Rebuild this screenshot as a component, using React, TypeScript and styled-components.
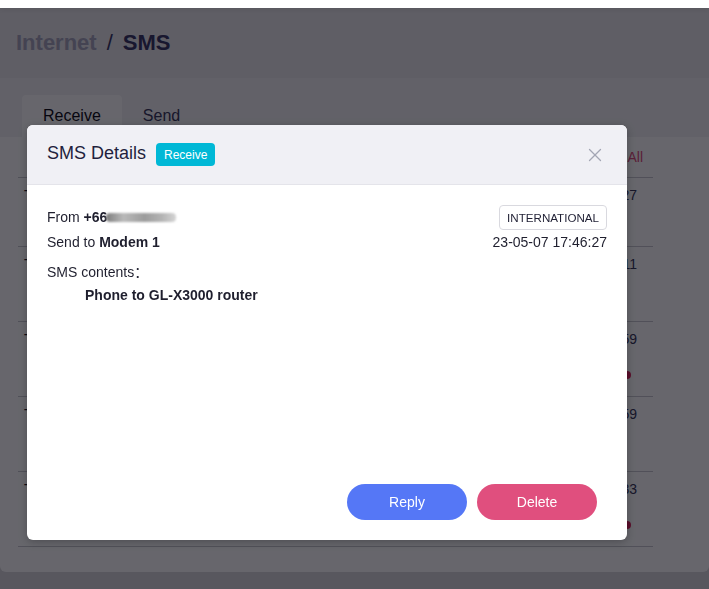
import React from "react";
import styled, { createGlobalStyle } from "styled-components";
import { X } from "lucide-react";

const GlobalStyle = createGlobalStyle`
  html, body {
    margin: 0;
    padding: 0;
    height: 100%;
    overflow: hidden;
  }
  body {
    background: #d9d9dd;
    font-family: "Liberation Sans", Arial, "Noto Sans CJK SC", sans-serif;
    color: #1f1f33;
  }
  * {
    box-sizing: border-box;
  }
`;

const Page = styled.div`
  display: flex;
  flex-direction: column;
  height: 589px;
`;

const TopStrip = styled.div`
  height: 8px;
  background: #fff;
  box-shadow: 0 2px 4px rgba(0, 0, 0, 0.06);
  position: relative;
  z-index: 1;
`;

const Header = styled.div`
  height: 70px;
  background: #eaeaee;
  display: flex;
  align-items: center;
  padding-left: 16px;
  font-size: 22px;
  font-weight: 700;
`;

const Crumb = styled.span<{ current?: boolean }>`
  color: ${({ current }) => (current ? "#3a3a66" : "#a8a8bd")};
`;

const Slash = styled.span`
  font-weight: 400;
  color: #3a3a66;
  margin: 0 10px;
`;

const TabStrip = styled.div`
  background: #f2f2f5;
  padding: 17px 0 0 22px;
  display: flex;
`;

const Tab = styled.div<{ active?: boolean }>`
  height: 42px;
  padding: 0 21px;
  display: flex;
  align-items: center;
  font-size: 16px;
  border-radius: 4px 4px 0 0;
  background: ${({ active }) => (active ? "#fff" : "transparent")};
  color: ${({ active }) => (active ? "#111118" : "#3a3a5c")};
`;

const Card = styled.div`
  background: #fff;
  height: 435px;
  border-radius: 0 0 6px 6px;
  padding: 0 56px 0 18px;
`;

const TableHead = styled.div`
  height: 41px;
  display: flex;
  align-items: center;
  justify-content: flex-end;
  padding-right: 10px;
  border-bottom: 1px solid #c9c9cf;
`;

const DeleteAll = styled.span`
  color: #e04f7e;
  font-size: 14px;
`;

const Row = styled.div<{ h: number }>`
  height: ${({ h }) => h}px;
  display: flex;
  justify-content: space-between;
  padding: 7px 16px 0 6px;
  border-bottom: 1px solid #c9c9cf;
  font-size: 14px;
  line-height: 20px;
`;

const RowText = styled.div`
  color: #1f1f33;
`;

const RowMeta = styled.div`
  display: flex;
  flex-direction: column;
  align-items: flex-end;
  color: #3a3a5c;
`;

const UnreadDot = styled.span`
  width: 8px;
  height: 8px;
  border-radius: 50%;
  background: #e0245e;
  margin: 22px 6px 0 0;
`;

const Overlay = styled.div`
  position: fixed;
  inset: 0;
  background: rgba(2, 0, 10, 0.6);
  padding: 125px 0 0 27px;
`;

const Modal = styled.div`
  width: 600px;
  height: 415px;
  background: #fff;
  border-radius: 6px;
  overflow: hidden;
  display: flex;
  flex-direction: column;
  box-shadow: 0 2px 8px rgba(0, 0, 0, 0.25);
`;

const ModalHeader = styled.div`
  height: 60px;
  flex-shrink: 0;
  background: #f0f0f5;
  border-bottom: 1px solid #e4e4ea;
  display: flex;
  align-items: center;
  padding: 0 21px 0 20px;
`;

const ModalTitle = styled.h3`
  margin: -2px 0 0;
  font-size: 18px;
  font-weight: 400;
  color: #1f1f3d;
`;

const Badge = styled.span`
  margin-left: 10px;
  height: 23px;
  padding: 0 8px;
  display: inline-flex;
  align-items: center;
  border-radius: 4px;
  background: #00b8d6;
  color: #fff;
  font-size: 12px;
`;

const CloseButton = styled.button`
  margin-left: auto;
  border: 0;
  background: none;
  padding: 0;
  width: 22px;
  height: 22px;
  display: flex;
  color: #a3a6b4;
  cursor: pointer;
`;

const ModalBody = styled.div`
  flex: 1;
  padding: 20px 20px 0 20px;
  font-size: 14px;
  color: #1f1f2e;
`;

const InfoRow = styled.div<{ h: number }>`
  height: ${({ h }) => h}px;
  display: flex;
  align-items: center;
  justify-content: space-between;
  margin-bottom: 2px;
`;

const Sender = styled.span`
  display: inline-flex;
  align-items: center;
  margin-top: -2px;
`;

const Strong = styled.b`
  font-weight: 700;
  white-space: pre;
`;

const Masked = styled.span`
  display: inline-block;
  width: 70px;
  height: 9px;
  margin: 1px 0 0 -1px;
  border-radius: 4px;
  background: linear-gradient(
    90deg,
    #7d7d7d,
    #b9b9b9 25%,
    #9c9c9c 55%,
    #b4b4b4 80%,
    #d4d4d4
  );
  filter: blur(1.1px);
`;

const Tag = styled.span`
  height: 25px;
  padding: 0 7px;
  display: inline-flex;
  align-items: center;
  border: 1px solid #d9d9df;
  border-radius: 4px;
  font-size: 11.6px;
  color: #1f1f33;
`;

const Label = styled.div`
  margin-top: 10px;
  line-height: 20px;
`;

const Content = styled.div`
  margin-top: 3px;
  padding-left: 38px;
  line-height: 20px;
  font-weight: 700;
`;

const ModalFooter = styled.div`
  display: flex;
  justify-content: flex-end;
  gap: 10px;
  padding: 0 30px 20px 0;
`;

const ActionButton = styled.button<{ tone: string }>`
  width: 120px;
  height: 36px;
  border: 0;
  border-radius: 18px;
  background: ${({ tone }) => tone};
  color: #fff;
  font-family: inherit;
  font-size: 14px;
  cursor: pointer;
`;

const rows = [
  { h: 69, time: "23-05-07 17:46:27", unread: false },
  { h: 75, time: "23-05-06 09:12:11", unread: false },
  { h: 75, time: "23-05-05 21:03:59", unread: true },
  { h: 75, time: "23-05-05 20:58:59", unread: false },
  { h: 75, time: "23-05-04 11:40:33", unread: true },
];

export default function App() {
  return (
    <>
      <GlobalStyle />
      <Page>
        <TopStrip />
        <Header>
          <Crumb>Internet</Crumb>
          <Slash>/</Slash>
          <Crumb current>SMS</Crumb>
        </Header>
        <TabStrip>
          <Tab active>Receive</Tab>
          <Tab>Send</Tab>
        </TabStrip>
        <Card>
          <TableHead>
            <DeleteAll>Delete All</DeleteAll>
          </TableHead>
          {rows.map((r, i) => (
            <Row key={i} h={r.h}>
              <RowText>Test message from modem</RowText>
              <RowMeta>
                <span>{r.time}</span>
                {r.unread && <UnreadDot />}
              </RowMeta>
            </Row>
          ))}
        </Card>
      </Page>
      <Overlay>
        <Modal>
          <ModalHeader>
            <ModalTitle>SMS Details</ModalTitle>
            <Badge>Receive</Badge>
            <CloseButton aria-label="Close">
              <X size={22} strokeWidth={1.4} />
            </CloseButton>
          </ModalHeader>
          <ModalBody>
            <InfoRow h={25}>
              <Sender>
                From <Strong> +66</Strong>
                <Masked />
              </Sender>
              <Tag>INTERNATIONAL</Tag>
            </InfoRow>
            <InfoRow h={20}>
              <span>
                Send to <Strong>Modem 1</Strong>
              </span>
              <span>23-05-07 17:46:27</span>
            </InfoRow>
            <Label>SMS contents：</Label>
            <Content>Phone to GL-X3000 router</Content>
          </ModalBody>
          <ModalFooter>
            <ActionButton tone="#5577f6">Reply</ActionButton>
            <ActionButton tone="#e04f7e">Delete</ActionButton>
          </ModalFooter>
        </Modal>
      </Overlay>
    </>
  );
}
